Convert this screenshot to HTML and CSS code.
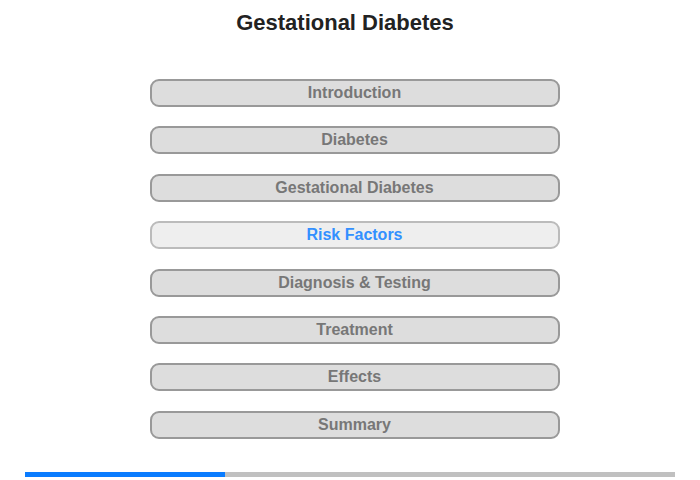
FILE: index.html
```html
<!DOCTYPE html>
<html>
<head>
<meta charset="utf-8">
<link rel="stylesheet" href="styles.css">
</head>
<body>
<div class="page">
  <h1 class="title">Gestational Diabetes</h1>
  <nav class="menu">
    <div class="btn">Introduction</div>
    <div class="btn">Diabetes</div>
    <div class="btn">Gestational Diabetes</div>
    <div class="btn active">Risk Factors</div>
    <div class="btn">Diagnosis &amp; Testing</div>
    <div class="btn">Treatment</div>
    <div class="btn">Effects</div>
    <div class="btn">Summary</div>
  </nav>
  <div class="progress"><div class="fill"></div></div>
</div>
</body>
</html>
```
FILE: styles.css
```css
html, body { margin: 0; padding: 0; background: #fff; }
.page {
  width: 700px; height: 480px;
  font-family: "Liberation Sans", Arial, sans-serif;
  display: flex; flex-direction: column; align-items: center;
}
.title {
  margin: 10px 0 0 0;
  padding-right: 10px;
  font-size: 22px; font-weight: bold; color: #222;
  line-height: 26px;
}
.menu {
  margin-top: 43px;
  display: flex; flex-direction: column; gap: 19.4px;
  padding-left: 9px;
}
.btn {
  box-sizing: border-box;
  width: 410px; height: 28px;
  border: 2px solid #999; border-radius: 9px;
  background: #ddd;
  color: #777; font-weight: bold; font-size: 16px;
  display: flex; align-items: center; justify-content: center;
}
.btn.active {
  background: #eee; border-color: #bbb; color: #3390ff;
}
.progress {
  margin-top: 33px;
  width: 650px; height: 5px; background: #c0c0c0;
}
.fill { width: 200px; height: 100%; background: #0a7cff; }
```
